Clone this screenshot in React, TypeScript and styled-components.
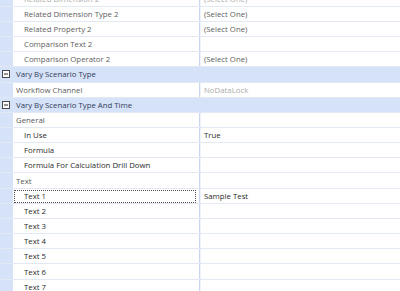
import React from 'react';
import styled, { createGlobalStyle } from 'styled-components';

const GlobalStyle = createGlobalStyle`
  html, body {
    margin: 0;
    padding: 0;
    background: #ffffff;
    overflow: hidden;
  }
  body {
    font-family: "Open Sans", "Noto Sans", sans-serif;
  }
`;

type Tone = 'muted' | 'dark' | 'faint';

type Item =
  | { kind: 'category'; label: string }
  | { kind: 'group'; label: string }
  | { kind: 'prop'; label: string; value?: string; indent: number; tone: Tone; valueTone?: Tone; focused?: boolean };

const items: Item[] = [
  { kind: 'prop', label: 'Related Dimension 2', value: '(Select One)', indent: 1, tone: 'faint', valueTone: 'faint' },
  { kind: 'prop', label: 'Related Dimension Type 2', value: '(Select One)', indent: 1, tone: 'muted', valueTone: 'muted' },
  { kind: 'prop', label: 'Related Property 2', value: '(Select One)', indent: 1, tone: 'muted', valueTone: 'muted' },
  { kind: 'prop', label: 'Comparison Text 2', indent: 1, tone: 'muted' },
  { kind: 'prop', label: 'Comparison Operator 2', value: '(Select One)', indent: 1, tone: 'muted', valueTone: 'muted' },
  { kind: 'category', label: 'Vary By Scenario Type' },
  { kind: 'prop', label: 'Workflow Channel', value: 'NoDataLock', indent: 0, tone: 'muted', valueTone: 'faint' },
  { kind: 'category', label: 'Vary By Scenario Type And Time' },
  { kind: 'group', label: 'General' },
  { kind: 'prop', label: 'In Use', value: 'True', indent: 1, tone: 'dark', valueTone: 'dark' },
  { kind: 'prop', label: 'Formula', indent: 1, tone: 'dark' },
  { kind: 'prop', label: 'Formula For Calculation Drill Down', indent: 1, tone: 'dark' },
  { kind: 'group', label: 'Text' },
  { kind: 'prop', label: 'Text 1', value: 'Sample Test', indent: 1, tone: 'dark', valueTone: 'dark', focused: true },
  { kind: 'prop', label: 'Text 2', indent: 1, tone: 'dark' },
  { kind: 'prop', label: 'Text 3', indent: 1, tone: 'dark' },
  { kind: 'prop', label: 'Text 4', indent: 1, tone: 'dark' },
  { kind: 'prop', label: 'Text 5', indent: 1, tone: 'dark' },
  { kind: 'prop', label: 'Text 6', indent: 1, tone: 'dark' },
  { kind: 'prop', label: 'Text 7', indent: 1, tone: 'dark' },
];

const toneColor = (tone?: Tone) =>
  tone === 'dark' ? '#2b2b2b' : tone === 'faint' ? '#ababab' : '#5e5e5e';

const CollapseIcon = () => (
  <svg width="8" height="8" viewBox="0 0 8 8">
    <rect x="0.5" y="0.5" width="7" height="7" fill="#ffffff" stroke="#4a4a4a" strokeWidth="1" />
    <line x1="2" y1="4" x2="6" y2="4" stroke="#2a2a2a" strokeWidth="1" />
  </svg>
);

const App: React.FC = () => {
  return (
    <>
      <GlobalStyle />
      <Grid>
        {items.map((item, i) => {
          if (item.kind === 'category') {
            return (
              <CategoryRow key={i}>
                <Gutter>
                  <CollapseIcon />
                </Gutter>
                <CategoryLabel>{item.label}</CategoryLabel>
              </CategoryRow>
            );
          }
          if (item.kind === 'group') {
            return (
              <Row key={i}>
                <Gutter />
                <NameCell indent={0} color="#585858">
                  {item.label}
                </NameCell>
                <ValueCell />
              </Row>
            );
          }
          return (
            <Row key={i}>
              <Gutter />
              <NameCell indent={item.indent} color={toneColor(item.tone)} focused={item.focused}>
                {item.label}
              </NameCell>
              <ValueCell color={toneColor(item.valueTone)}>{item.value}</ValueCell>
            </Row>
          );
        })}
      </Grid>
    </>
  );
};

const ROW = 15.17;

const Grid = styled.div`
  display: flex;
  flex-direction: column;
  width: 400px;
  margin-top: -8.4px;
  font-size: 7.8px;
`;

const Row = styled.div`
  display: flex;
  height: ${ROW}px;
  box-sizing: border-box;
  border-bottom: 1px solid #e3e9f3;
`;

const Gutter = styled.div`
  width: 13px;
  flex-shrink: 0;
  background: #d5e2f7;
  display: flex;
  align-items: center;
  justify-content: center;
  padding-right: 1px;
  box-sizing: border-box;
`;

const NameCell = styled.div<{ indent: number; color: string; focused?: boolean }>`
  position: relative;
  width: 187px;
  flex-shrink: 0;
  display: flex;
  align-items: center;
  box-sizing: border-box;
  padding-left: ${p => (p.indent ? 11 : 3)}px;
  color: ${p => p.color};
  white-space: nowrap;
  border-right: 1px solid #c8d6ee;

  &::after {
    content: '';
    display: ${p => (p.focused ? 'block' : 'none')};
    position: absolute;
    top: 1px;
    bottom: 0;
    left: 1px;
    right: 3px;
    border: 1px dotted #505050;
  }
`;

const ValueCell = styled.div<{ color?: string }>`
  flex: 1;
  display: flex;
  align-items: center;
  padding-left: 3px;
  color: ${p => p.color || '#2b2b2b'};
  white-space: nowrap;
  border-left: 1px solid #eef2f9;
`;

const CategoryRow = styled.div`
  display: flex;
  height: ${ROW}px;
  box-sizing: border-box;
  background: #d5e2f7;
  border-bottom: 1px solid #e3e9f3;
`;

const CategoryLabel = styled.div`
  display: flex;
  align-items: center;
  padding-left: 3px;
  color: #33405a;
  white-space: nowrap;
`;

export default App;
